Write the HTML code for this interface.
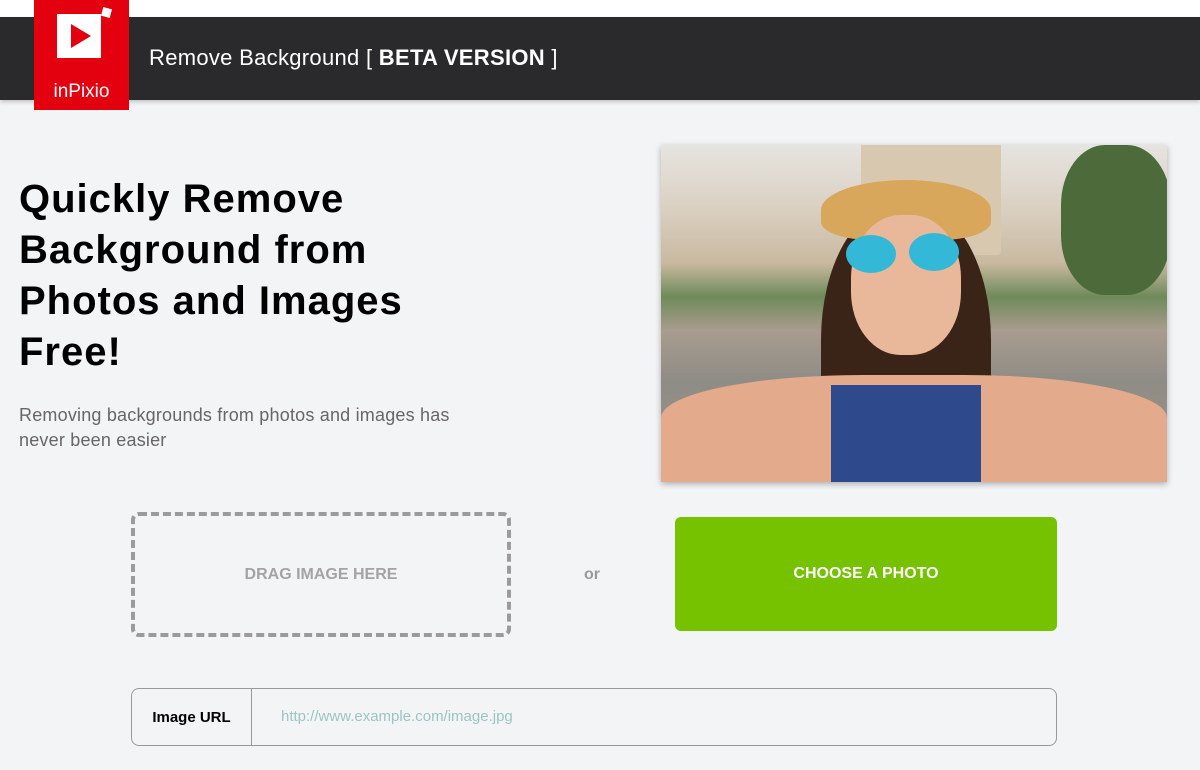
<!DOCTYPE html>
<html><head><style>
*{margin:0;padding:0;box-sizing:border-box}
body{width:1200px;height:770px;background:#f3f4f6;font-family:"Liberation Sans",sans-serif;position:relative;overflow:hidden}
.top{position:absolute;left:0;top:0;width:1200px;height:17px;background:#fff}
.bar{position:absolute;left:0;top:17px;width:1200px;height:83px;background:#2a2a2c;box-shadow:0 2px 4px rgba(0,0,0,.2)}
.logo{position:absolute;left:34px;top:0;width:95px;height:110px;background:#e3000f}
.logo .sq{position:absolute;left:23px;top:14px;width:44px;height:44px;background:#fff}
.logo .sm{position:absolute;left:68px;top:8px;width:9px;height:9px;background:#fff;transform:rotate(15deg)}
.logo .tri{position:absolute;left:37px;top:24px;width:0;height:0;border-left:20px solid #e3000f;border-top:12px solid transparent;border-bottom:12px solid transparent}
.logo .t{position:absolute;left:0;width:95px;top:81px;text-align:center;color:#fff;font-size:19px}
.title{position:absolute;left:149px;top:45px;color:#fff;font-size:22px;letter-spacing:0.3px}
h1{position:absolute;left:19px;top:174px;font-size:40px;line-height:51px;color:#000;font-weight:bold;width:470px;letter-spacing:1px}
.sub{position:absolute;left:19px;top:403px;font-size:18px;line-height:25px;color:#666;letter-spacing:0.2px}
.photo{position:absolute;left:661px;top:145px;width:506px;height:337px;overflow:hidden;box-shadow:0 2px 6px rgba(0,0,0,.3);
background:linear-gradient(180deg,#e6e4e0 0%,#d9cfc0 20%,#c9b9a0 35%,#6f8a5a 45%,#a89c8e 55%,#8f8c86 70%,#9d9788 100%)}
.drag{position:absolute;left:131px;top:512px;width:380px;height:125px;border:4px dashed #9b9b9b;border-radius:8px;color:#a3a3a3;font-weight:bold;font-size:16px;display:flex;align-items:center;justify-content:center}
.or{position:absolute;left:584px;top:566px;color:#999;font-weight:bold;font-size:16px}
.btn{position:absolute;left:675px;top:517px;width:382px;height:114px;background:#76c100;border-radius:6px;color:#fff;font-weight:bold;font-size:16px;display:flex;align-items:center;justify-content:center}
.url{position:absolute;left:131px;top:688px;width:926px;height:58px;border:1.5px solid #999;border-radius:8px}
.url .l{position:absolute;left:0;top:0;width:120px;height:100%;border-right:1.5px solid #999;display:flex;align-items:center;justify-content:center;font-weight:bold;font-size:15px}
.url .p{position:absolute;left:149px;top:19px;color:#9cc4c4;font-size:15px}
</style></head><body>
<div class="top"></div><div class="bar"></div>
<div class="logo"><div class="sq"></div><div class="tri"></div><div class="sm"></div><div class="t">inPixio</div></div>
<div class="title">Remove Background [ <b>BETA VERSION</b> ]</div>
<h1>Quickly Remove Background from Photos and Images Free!</h1>
<div class="sub">Removing backgrounds from photos and images has<br>never been easier</div>
<div class="photo">
<div style="position:absolute;left:200px;top:-10px;width:140px;height:120px;background:#d8c8b0;border-radius:4px"></div>
<div style="position:absolute;left:400px;top:0;width:110px;height:150px;background:#4d6b3a;border-radius:40%"></div>
<div style="position:absolute;left:160px;top:60px;width:170px;height:300px;background:#3a2418;border-radius:45% 45% 10% 10%"></div>
<div style="position:absolute;left:160px;top:35px;width:170px;height:60px;background:#d9a75b;border-radius:50% 50% 30% 30%"></div>
<div style="position:absolute;left:190px;top:70px;width:110px;height:140px;background:#e9b79a;border-radius:45%"></div>
<div style="position:absolute;left:185px;top:90px;width:50px;height:38px;background:#34b8d8;border-radius:50%"></div>
<div style="position:absolute;left:248px;top:88px;width:50px;height:38px;background:#34b8d8;border-radius:50%"></div>
<div style="position:absolute;left:0;top:230px;width:506px;height:107px;background:#e3aa8c;border-radius:40% 40% 0 0"></div>
<div style="position:absolute;left:170px;top:240px;width:150px;height:100px;background:#2e4a8c"></div>
</div>
<div class="drag">DRAG IMAGE HERE</div>
<div class="or">or</div>
<div class="btn">CHOOSE A PHOTO</div>
<div class="url"><div class="l">Image URL</div><div class="p">http://www.example.com/image.jpg</div></div>
</body></html>
